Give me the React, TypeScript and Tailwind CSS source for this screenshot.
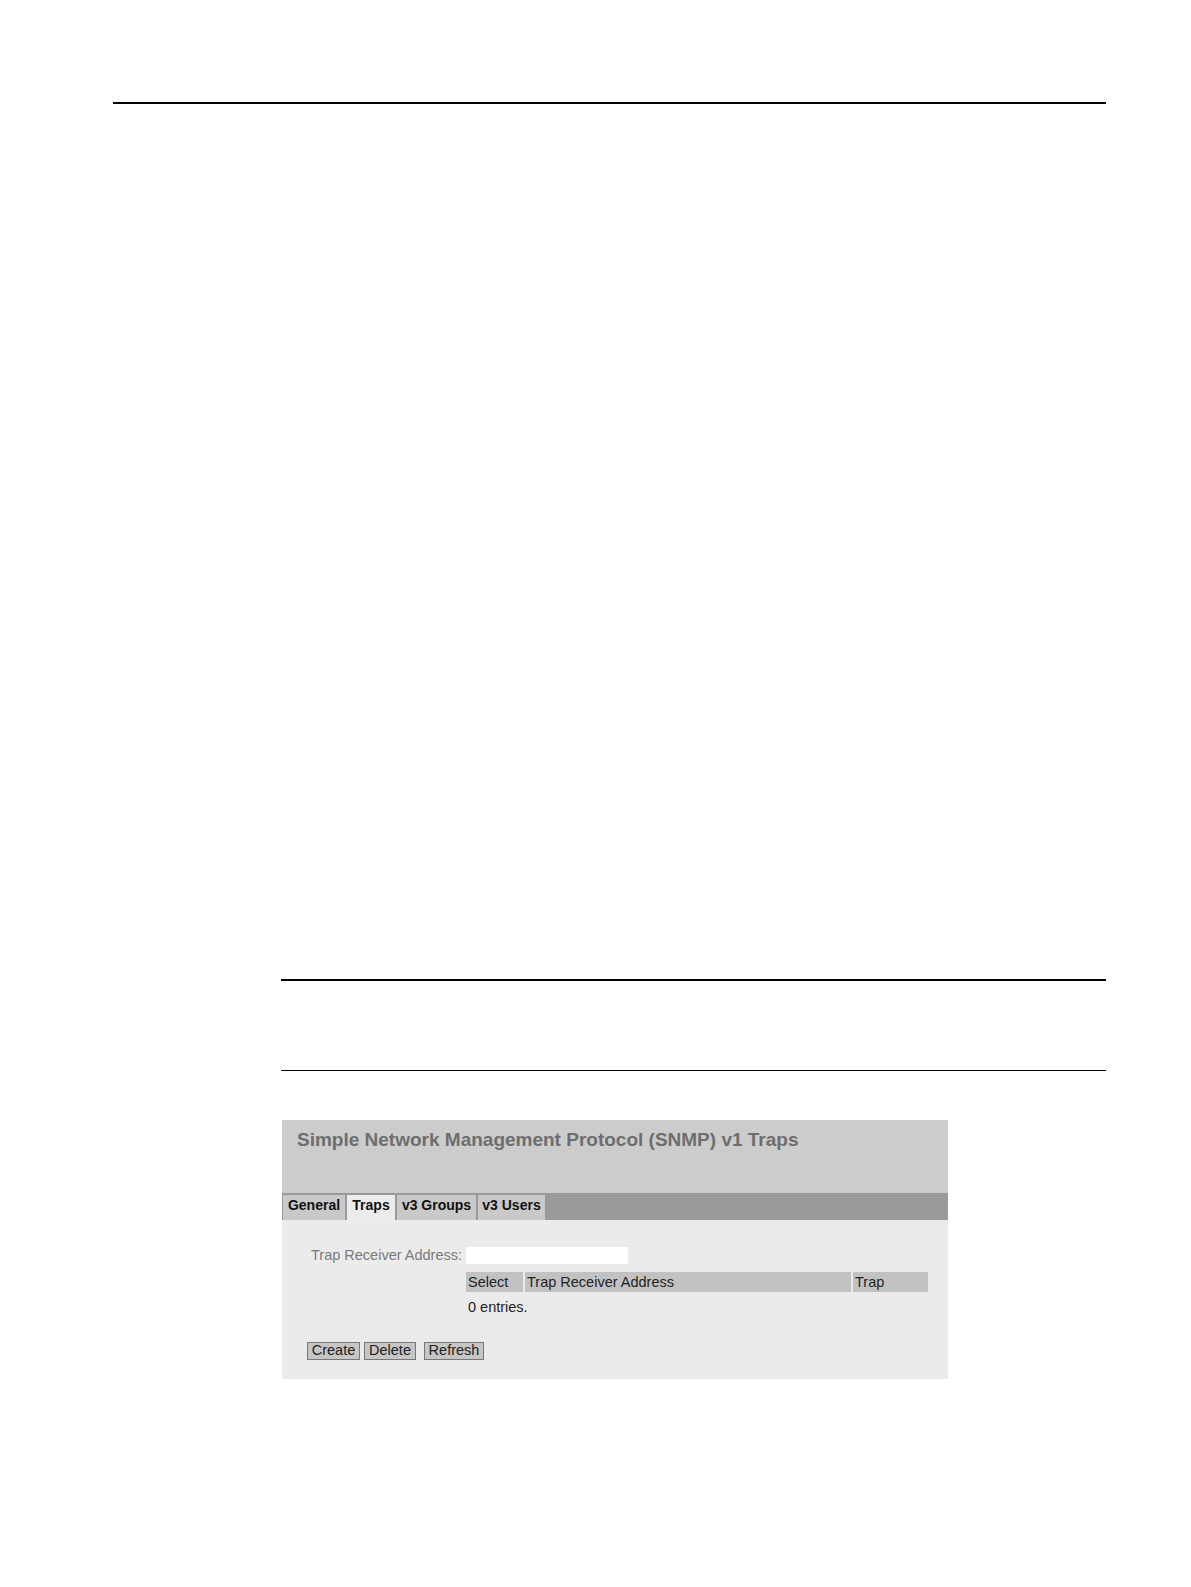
const tabs = [
  { label: "General", w: "w-[62px]" },
  { label: "Traps", w: "w-[48px]", active: true },
  { label: "v3 Groups", w: "w-[79px]" },
  { label: "v3 Users", w: "w-[67px]" },
];

function SnmpPanel() {
  return (
    <div className="ml-[282px] w-[666px] bg-[#ebebeb] font-['Liberation_Sans',Arial,sans-serif]">
      <div className="h-[73px] bg-[#cccccc] px-[15px] pt-[8px]">
        <h1 className="text-[19px] font-bold leading-[23px] text-[#6e6e6e]">
          Simple Network Management Protocol (SNMP) v1 Traps
        </h1>
      </div>
      <div className="flex h-[27px] gap-[2px] bg-[#9a9a9a] pl-[1px] pt-[2px]">
        {tabs.map((t) => (
          <div
            key={t.label}
            className={
              "flex justify-center pt-[3px] text-[14px] font-bold leading-[14px] text-[#111] " +
              t.w +
              (t.active ? " bg-[#ececec]" : " bg-[#c9c9c9]")
            }
          >
            {t.label}
          </div>
        ))}
      </div>
      <div className="pb-[19px] pl-[25px] pr-[20px] pt-[27px]">
        <div className="flex items-center">
          <span className="w-[159px] pl-[4px] text-[14.5px] leading-none text-[#7a7a7a]">
            Trap Receiver Address:
          </span>
          <div className="h-[17px] w-[162px] bg-white" />
        </div>
        <div className="ml-[159px] mt-[8px] flex h-[20px] gap-[2px] text-[14.5px] leading-none text-[#222]">
          <div className="flex w-[57px] items-center bg-[#c2c2c2] pl-[2px]">Select</div>
          <div className="flex w-[326px] items-center bg-[#c2c2c2] pl-[2px]">Trap Receiver Address</div>
          <div className="flex w-[75px] items-center bg-[#c2c2c2] pl-[2px]">Trap</div>
        </div>
        <div className="ml-[161px] mt-[8px] text-[14.5px] leading-none text-[#222]">0 entries.</div>
        <div className="mt-[27px] flex text-[14.5px] leading-none text-[#222]">
          <button className="h-[18px] w-[53px] border border-[#777] bg-[#c6c6c6]">Create</button>
          <button className="ml-[4px] h-[18px] w-[52px] border border-[#777] bg-[#c6c6c6]">Delete</button>
          <button className="ml-[8px] h-[18px] w-[60px] border border-[#777] bg-[#c6c6c6]">Refresh</button>
        </div>
      </div>
    </div>
  );
}

export default function App() {
  return (
    <div className="min-h-[1587px] w-[1191px] bg-white pt-[102px]">
      <div className="ml-[113px] h-[2px] w-[993px] bg-black" />
      <div className="ml-[281px] mt-[875px] h-[2px] w-[825px] bg-black" />
      <div className="ml-[281px] mt-[89px] h-[1px] w-[825px] bg-black" />
      <div className="mt-[49px]">
        <SnmpPanel />
      </div>
    </div>
  );
}
